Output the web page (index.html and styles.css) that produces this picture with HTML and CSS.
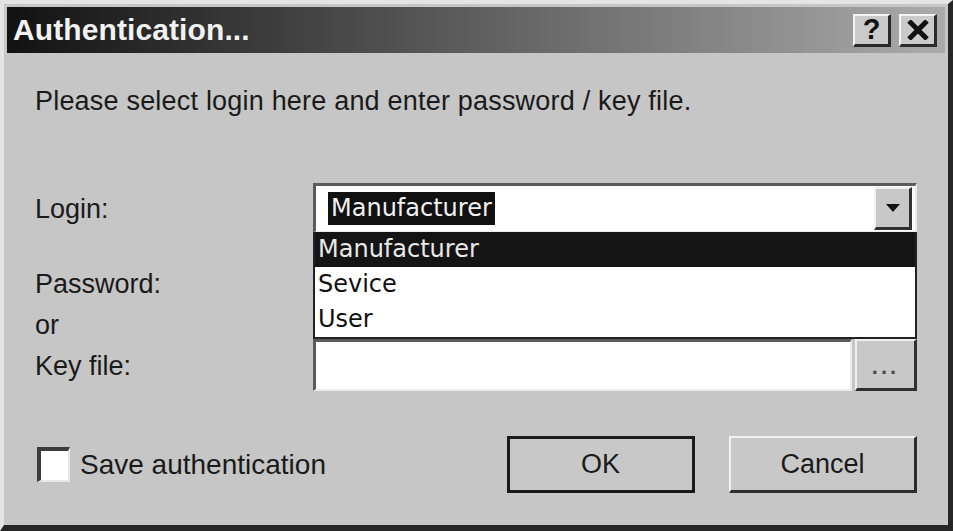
FILE: index.html
```html
<!DOCTYPE html>
<html lang="en">
    <head>
        <meta charset="UTF-8" />
        <title>Authentication...</title>
        <link rel="stylesheet" href="styles.css">
    </head>
    <body>
        <div class="window">
            <!-- title bar -->
            <div class="titlebar">
                <span class="title">Authentication...</span>
                <div class="title-buttons">
                    <span class="tbtn help">?</span>
                    <span class="tbtn close">
                        <svg width="22" height="20" viewBox="0 0 22 20">
                            <path d="M2 1 L20 19 M20 1 L2 19" stroke="#111" stroke-width="5" />
                        </svg>
                    </span>
                </div>
            </div>

            <div class="content">
                <p class="intro">Please select login here and enter password / key file.</p>

                <div class="form">
                    <div class="label login-label">Login:</div>
                    <div class="combo">
                        <span class="combo-text"><span class="sel">Manufacturer</span></span>
                        <span class="combo-btn">
                            <svg width="14" height="8" viewBox="0 0 14 8"><path d="M0 0 H14 L7 8 Z" fill="#111" /></svg>
                        </span>
                        <!-- open list -->
                        <ul class="dropdown">
                            <li class="active">Manufacturer</li>
                            <li>Sevice</li>
                            <li>User</li>
                        </ul>
                    </div>

                    <div class="label multi">Password:<br />or<br />Key file:</div>
                    <div class="fields">
                        <div class="field"></div>
                        <div class="keyrow">
                            <div class="field"></div>
                            <span class="browse">...</span>
                        </div>
                    </div>
                </div>

                <div class="footer">
                    <label class="check">
                        <span class="box"></span>
                        <span>Save authentication</span>
                    </label>
                    <div class="buttons">
                        <span class="btn default">OK</span>
                        <span class="btn">Cancel</span>
                    </div>
                </div>
            </div>
        </div>
    </body>
</html>
```

FILE: styles.css
```css
* {
    margin: 0;
    padding: 0;
    box-sizing: border-box;
}
html,
body {
    width: 100%;
    height: 100%;
    overflow: hidden;
    background: #c6c6c6;
}
body {
    font-family: "Liberation Sans", Arial, sans-serif;
    font-size: 27px;
    color: #1a1a1a;
}
.window {
    width: 953px;
    height: 531px;
    display: flex;
    flex-direction: column;
    background: #c6c6c6;
    border-style: solid;
    border-width: 4px 5px 6px 4px;
    border-color: #e4e4e4 #262626 #262626 #e4e4e4;
    padding: 3px;
}

/* title bar */
.titlebar {
    height: 46px;
    display: flex;
    align-items: center;
    justify-content: space-between;
    padding: 0 8px 0 6px;
    background: linear-gradient(to right, #121212 0%, #ababab 100%);
}
.title {
    color: #f2f2f2;
    font-weight: bold;
    font-size: 30px;
    letter-spacing: 0.1px;
}
.title-buttons {
    display: flex;
    gap: 8px;
}
.tbtn {
    width: 38px;
    height: 33px;
    display: flex;
    align-items: center;
    justify-content: center;
    background: #cacaca;
    border-style: solid;
    border-width: 2px 3px 3px 2px;
    border-color: #f4f4f4 #2a2a2a #2a2a2a #f4f4f4;
    font-weight: bold;
    font-size: 29px;
    color: #111;
}

/* body */
.content {
    flex: 1;
    padding: 33px 28px 0 28px;
}
.intro {
    line-height: 30px;
    letter-spacing: 0.2px;
}
.form {
    margin-top: 67px;
    display: grid;
    grid-template-columns: 278px 1fr;
    row-gap: 29px;
}
.label {
    line-height: 30px;
}
.login-label {
    padding-top: 11px;
}
.multi {
    line-height: 41px;
    padding-top: 2px;
}

.combo {
    position: relative;
    height: 50px;
    display: flex;
    align-items: center;
    justify-content: space-between;
    background: #fff;
    border-style: solid;
    border-width: 3px 2px 2px 3px;
    border-color: #5a5a5a #ececec #ececec #5a5a5a;
    padding: 0 3px 0 12px;
    font-family: "DejaVu Sans", Verdana, sans-serif;
    font-size: 24px;
}
.sel {
    display: inline-block;
    background: #111;
    color: #f0f0f0;
    padding: 2px 3px;
    line-height: 29px;
}
.combo-btn {
    width: 38px;
    height: 43px;
    display: flex;
    align-items: center;
    justify-content: center;
    background: #c8c8c8;
    border-style: solid;
    border-width: 2px 3px 3px 2px;
    border-color: #f0f0f0 #303030 #303030 #f0f0f0;
}
.dropdown {
    position: absolute;
    top: 100%;
    left: -3px;
    right: -2px;
    margin-top: 1px;
    list-style: none;
    background: #fff;
    border: 2px solid #222;
    border-top: 0;
    font-family: "DejaVu Sans", Verdana, sans-serif;
    font-size: 24px;
    z-index: 5;
}
.dropdown li {
    height: 35px;
    line-height: 35px;
    padding-left: 3px;
    color: #111;
}
.dropdown li.active {
    background: #141414;
    color: #e8e8e8;
}

.fields {
    display: flex;
    flex-direction: column;
    gap: 27px;
}
.field {
    height: 50px;
    background: #fff;
    border-style: solid;
    border-width: 3px 2px 2px 3px;
    border-color: #5a5a5a #ececec #ececec #5a5a5a;
}
.keyrow {
    display: flex;
    gap: 3px;
}
.keyrow .field {
    flex: 1;
    height: 52px;
}
.browse {
    width: 62px;
    height: 52px;
    display: flex;
    align-items: center;
    justify-content: center;
    padding-top: 4px;
    background: #c8c8c8;
    border-style: solid;
    border-width: 2px 3px 3px 2px;
    border-color: #f0f0f0 #303030 #303030 #f0f0f0;
    font-size: 22px;
    font-weight: bold;
    letter-spacing: 3px;
    color: #4a4a4a;
}

/* footer */
.footer {
    margin-top: 45px;
    height: 57px;
    display: flex;
    align-items: center;
    justify-content: space-between;
}
.check {
    display: flex;
    align-items: center;
    gap: 10px;
    padding-left: 2px;
    font-size: 28px;
}
.box {
    width: 33px;
    height: 35px;
    background: #fff;
    border-style: solid;
    border-width: 4px 2px 2px 4px;
    border-color: #3c3c3c #e8e8e8 #e8e8e8 #3c3c3c;
}
.buttons {
    display: flex;
    gap: 34px;
}
.btn {
    width: 188px;
    height: 57px;
    display: flex;
    align-items: center;
    justify-content: center;
    background: #c8c8c8;
    border-style: solid;
    border-width: 2px 3px 3px 2px;
    border-color: #f2f2f2 #2e2e2e #2e2e2e #f2f2f2;
}
.btn.default {
    outline: 3px solid #1a1a1a;
    outline-offset: -3px;
}
```
